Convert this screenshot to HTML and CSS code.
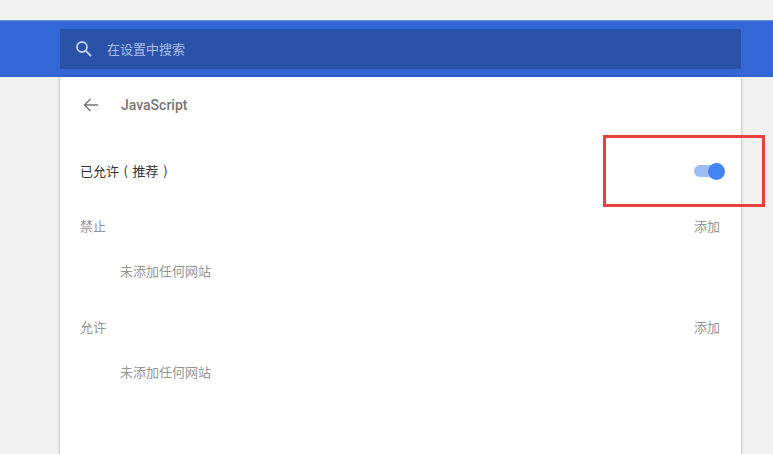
FILE: index.html
```html
<!DOCTYPE html>
<html lang="zh-CN">
<head>
<meta charset="utf-8">
<title>JavaScript</title>
<link rel="stylesheet" href="styles.css">
</head>
<body>
<div class="page">
  <div class="topgap"></div>
  <header class="bar">
    <div class="search">
      <svg class="search-icon" width="18" height="18" viewBox="0 0 18 18" aria-hidden="true"><circle cx="7" cy="7" r="5" fill="none" stroke="#c3d4f3" stroke-width="1.8"/><path d="M10.6 10.6 L16 16" stroke="#c3d4f3" stroke-width="2" fill="none"/></svg>
      <span class="search-text">在设置中搜索</span>
    </div>
  </header>
  <main class="card">
    <div class="head">
      <svg class="back" width="16" height="14" viewBox="0 0 16 14" aria-hidden="true"><path d="M15 7 H2 M7.5 1 L1.5 7 L7.5 13" fill="none" stroke="#757575" stroke-width="1.4"/></svg>
      <span class="title">JavaScript</span>
    </div>
    <div class="toggle-row">
      <span class="toggle-label">已允许 ( 推荐 )</span>
      <span class="switch"><span class="track"></span><span class="knob"></span></span>
    </div>
    <div class="section-head first"><span>禁止</span><span>添加</span></div>
    <div class="empty">未添加任何网站</div>
    <div class="section-head"><span>允许</span><span>添加</span></div>
    <div class="empty">未添加任何网站</div>
  </main>
  <div class="marker"></div>
</div>
</body>
</html>
```
FILE: styles.css
```css
html, body {
  margin: 0;
  padding: 0;
}
body {
  background: #f1f1f1;
  font-family: "Noto Sans CJK SC", "Liberation Sans", sans-serif;
  overflow: hidden;
}
.page {
  position: relative;
  width: 773px;
  height: 454px;
  overflow: hidden;
}
.topgap {
  height: 20px;
  background: #f2f2f2;
}
.bar {
  height: 57px;
  box-sizing: border-box;
  padding: 9px 32px 8px 60px;
  background: #3367d6;
  border-top: 1px solid #6f93dd;
}
.search {
  display: flex;
  align-items: center;
  height: 40px;
  margin-top: -1px;
  background: #2a52a8;
}
.search-icon {
  margin-left: 15px;
}
.search-text {
  margin-left: 14px;
  margin-bottom: 2px;
  font-size: 13px;
  color: #a9bfe8;
}
.card {
  width: 681px;
  height: 377px;
  margin-left: 60px;
  box-sizing: border-box;
  padding: 0 20px;
  background: #fff;
  box-shadow: 0 0 2px 1px rgba(0, 0, 0, 0.16);
}
.head {
  display: flex;
  align-items: center;
  height: 56px;
  padding-left: 3px;
}
.back {
  flex: none;
}
.title {
  margin-left: 22px;
  font-family: "Roboto", "Liberation Sans", sans-serif;
  font-size: 14px;
  font-weight: 500;
  color: #757575;
}
.toggle-row {
  display: flex;
  justify-content: space-between;
  align-items: center;
  height: 20px;
  margin-top: 28px;
  margin-right: -4px;
}
.toggle-label {
  margin-bottom: 2px;
  font-size: 13px;
  word-spacing: 1.7px;
  color: #333;
}
.switch {
  position: relative;
  width: 31px;
  height: 18px;
}
.track {
  position: absolute;
  left: 0;
  top: 3px;
  width: 28px;
  height: 12px;
  border-radius: 6px;
  background: #9dbdf3;
}
.knob {
  position: absolute;
  left: 14px;
  top: 1px;
  width: 17px;
  height: 17px;
  border-radius: 50%;
  background: #4285f4;
}
.section-head {
  display: flex;
  justify-content: space-between;
  height: 20px;
  line-height: 20px;
  margin-top: 36px;
  padding-right: 1px;
  font-size: 13px;
  color: #949494;
}
.section-head.first {
  margin-top: 35px;
}
.empty {
  height: 20px;
  line-height: 20px;
  margin-top: 25px;
  padding-left: 40px;
  font-size: 13px;
  color: #949494;
}
.marker {
  position: absolute;
  left: 603px;
  top: 135px;
  width: 162px;
  height: 72px;
  box-sizing: border-box;
  border: 3px solid #e8413c;
}
```
